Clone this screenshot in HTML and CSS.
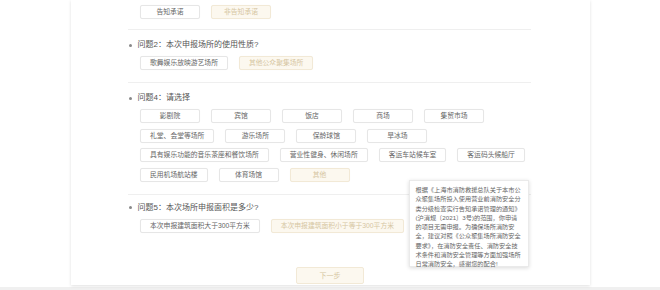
FILE: index.html
```html
<!DOCTYPE html>
<html lang="zh-CN">
<head>
    <meta charset="UTF-8">
    <meta name="viewport" content="width=device-width, initial-scale=1.0">
    <title>告知承诺申报</title>
    <link rel="stylesheet" href="styles.css">
</head>
<body>
    <div class="panel">
        <div class="question question-first">
            <div class="options">
                <span class="opt">告知承诺</span>
                <span class="opt active">非告知承诺</span>
            </div>
        </div>

        <div class="question">
            <p class="title">问题2：本次申报场所的使用性质?</p>
            <div class="options">
                <span class="opt">歌舞娱乐放映游艺场所</span>
                <span class="opt active">其他公众聚集场所</span>
            </div>
        </div>

        <div class="question">
            <p class="title">问题4：请选择</p>
            <div class="options">
                <span class="opt">影剧院</span>
                <span class="opt">宾馆</span>
                <span class="opt">饭店</span>
                <span class="opt">商场</span>
                <span class="opt">集贸市场</span>
                <span class="break"></span>
                <span class="opt">礼堂、会堂等场所</span>
                <span class="opt">游乐场所</span>
                <span class="opt">保龄球馆</span>
                <span class="opt">旱冰场</span>
                <span class="break"></span>
                <span class="opt">具有娱乐功能的音乐茶座和餐饮场所</span>
                <span class="opt">营业性健身、休闲场所</span>
                <span class="opt">客运车站候车室</span>
                <span class="opt">客运码头候船厅</span>
                <span class="break"></span>
                <span class="opt">民用机场航站楼</span>
                <span class="opt">体育场馆</span>
                <span class="opt active">其他</span>
            </div>
        </div>

        <div class="question question-last">
            <p class="title">问题5：本次场所申报面积是多少?</p>
            <div class="options">
                <span class="opt">本次申报建筑面积大于300平方米</span>
                <span class="opt active">本次申报建筑面积小于等于300平方米</span>
            </div>
        </div>

        <div class="footer">
            <span class="next-btn">下一步</span>
        </div>

        <div class="tip">
            根据《上海市消防救援总队关于本市公众聚集场所投入使用营业前消防安全分类分级检查实行告知承诺管理的通知》(沪消规〔2021〕3号)的范围，你申请的项目无需申报。为确保场所消防安全，建议对照《公众聚集场所消防安全要求》，在消防安全责任、消防安全技术条件和消防安全管理等方面加强场所日常消防安全，感谢您的配合!
        </div>
    </div>
    <div class="page-foot"></div>
</body>
</html>
```

FILE: styles.css
```css
*{margin: 0;padding: 0;box-sizing: border-box;}

body{
    background-color: #fff;
    font-family: "Liberation Sans", "Noto Sans CJK SC", sans-serif;
    color: #555;
}

.panel{
    width: 519px;
    height: 285px;
    margin: 0 auto;
    padding: 0 45px 0 57px;
    position: relative;
    background-color: #fff;
    box-shadow: 0 1px 3px rgba(0,0,0,0.13);
}

.question{
    padding: 8px 0 12px 0;
    margin-right: 14px;
    border-bottom: 1px solid #efefef;
}
.question-first{
    padding: 5px 0 10px 0;
}
.question-last{
    padding-top: 6px;
    border-bottom: none;
}

.title{
    position: relative;
    padding-left: 10px;
    height: 14px;
    line-height: 14px;
    font-size: 8px;
    color: #555;
}
.title::before{
    content: "";
    position: absolute;
    left: 1px;
    top: 5.5px;
    width: 3px;
    height: 3px;
    border-radius: 50%;
    background-color: #888;
}

.options{
    display: flex;
    flex-wrap: wrap;
    column-gap: 11px;
    padding-left: 12.5px;
    margin-top: 4px;
    margin-right: -14px;
}
.question-first .options{
    margin-top: 0;
}

.break{
    flex-basis: 100%;
    height: 5.5px;
}

.opt{
    display: inline-block;
    min-width: 60px;
    height: 14px;
    line-height: 12px;
    padding: 0 9px;
    font-size: 6.8px;
    text-align: center;
    color: #666;
    background-color: #fff;
    border: 1px solid #e6e6e6;
    border-radius: 2px;
    box-shadow: 0 0 1px rgba(0,0,0,0.04);
}

.opt.active{
    color: #d6c6a2;
    background-color: #fcf8ef;
    border-color: #f2e9d6;
}

.footer{
    display: flex;
    justify-content: center;
    padding: 22px 12px 0 0;
}

.next-btn{
    display: inline-block;
    width: 68px;
    height: 17px;
    line-height: 15px;
    font-size: 7px;
    text-align: center;
    color: #d6c6a2;
    background-color: #fcf8ef;
    border: 1px solid #f2e9d6;
    border-radius: 2px;
}

.tip{
    position: absolute;
    left: 338px;
    top: 180px;
    width: 120px;
    height: 87px;
    padding: 4px 6px;
    font-size: 6.2px;
    line-height: 9.25px;
    color: #666;
    background-color: #fff;
    border: 1px solid #eaeaea;
    box-shadow: 0 1px 4px rgba(0,0,0,0.15);
}

.page-foot{
    height: 3px;
    margin-top: 2px;
    background-color: #f0f0f0;
}
```
